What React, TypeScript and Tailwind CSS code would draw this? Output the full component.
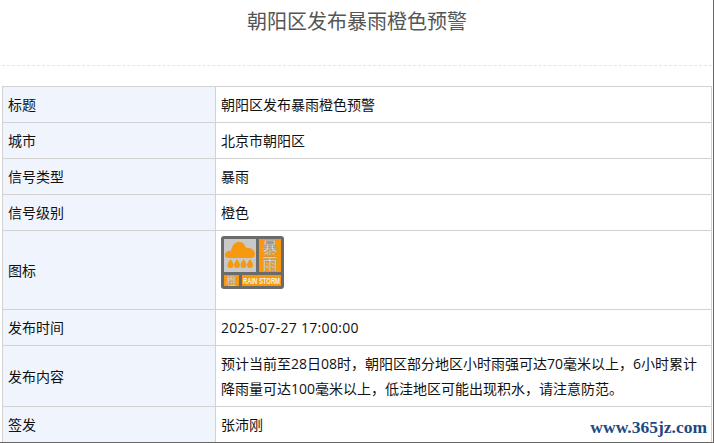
const cjk = { fontFamily: '"Open Sans", "Noto Sans CJK SC", sans-serif' }

const rows: { label: string; value: React.ReactNode; h: string }[] = [
  { label: '标题', value: '朝阳区发布暴雨橙色预警', h: 'h-[36px]' },
  { label: '城市', value: '北京市朝阳区', h: 'h-[36px]' },
  { label: '信号类型', value: '暴雨', h: 'h-[36px]' },
  { label: '信号级别', value: '橙色', h: 'h-[36px]' },
  { label: '图标', value: <StormIcon />, h: 'h-[79px]' },
  { label: '发布时间', value: <span className="tracking-[0.3px]">2025-07-27 17:00:00</span>, h: 'h-[36px]' },
  {
    label: '发布内容',
    value: (
      <p className="leading-[25px]">
        预计当前至28日08时，朝阳区部分地区小时雨强可达70毫米以上，6小时累计降雨量可达100毫米以上，低洼地区可能出现积水，请注意防范。
      </p>
    ),
    h: 'h-[61px]',
  },
  { label: '签发', value: '张沛刚', h: 'h-[36px]' },
]

function StormIcon() {
  return (
    <svg width="63" height="53" viewBox="0 0 63 53" className="mb-[16px] block">
      <rect width="63" height="53" rx="3" fill="#6b6b6b" />
      <rect x="3" y="3" width="32" height="33" fill="#c9c9c9" />
      <rect x="38" y="3" width="22" height="33" fill="#f7990f" />
      <rect x="3" y="39" width="15" height="11" fill="#f7990f" />
      <rect x="21" y="39" width="39" height="11" fill="#f7990f" />
      <path d="M4 19c0-3 3-5 6-4 1-6 5-10 9-9 3 0 5 3 6 6 4-1 9 2 9 6 0 3-2 4-4 4H8c-3 0-4-1-4-3z" fill="#f7990f" />
      <path d="M9.500 23c2 3 3 4.500 3 6a3 3 0 0 1-6 0c0-1.500 1-3 3-6zM16 23c2 3 3 4.500 3 6a3 3 0 0 1-6 0c0-1.500 1-3 3-6zM22.500 23c2 3 3 4.500 3 6a3 3 0 0 1-6 0c0-1.500 1-3 3-6zM29 23c2 3 3 4.500 3 6a3 3 0 0 1-6 0c0-1.500 1-3 3-6z" fill="#f7990f" />
      <text x="49" y="17" textAnchor="middle" fontSize="15" fill="#ececec" stroke="#8a8a8a" strokeWidth="0.3" fontFamily="Noto Sans CJK SC">暴</text>
      <text x="49" y="33" textAnchor="middle" fontSize="15" fill="#ececec" stroke="#8a8a8a" strokeWidth="0.3" fontFamily="Noto Sans CJK SC">雨</text>
      <text x="10.500" y="48.500" textAnchor="middle" fontSize="10" fill="#ececec" stroke="#8a8a8a" strokeWidth="0.2" fontFamily="Noto Sans CJK SC">橙</text>
      <text x="22" y="48" textLength="37" lengthAdjust="spacingAndGlyphs" fontSize="9" fontWeight="700" fill="#f4f4f4" fontFamily="Liberation Sans">RAIN STORM</text>
    </svg>
  )
}

export default function App() {
  return (
    <div className="relative h-[443px] w-[714px] overflow-hidden bg-white" style={cjk}>
      {/* Header */}
      <div className="mx-[2px] h-[66px] border-b border-dashed border-[#e5e5e5] pt-[9px] text-center">
        <h1 className="text-[20px] leading-[26px] font-normal text-[#555]">朝阳区发布暴雨橙色预警</h1>
      </div>

      <table className="mt-[20px] ml-[2px] w-[710px] table-fixed border-collapse text-[14px] text-[#111]">
        <colgroup>
          <col className="w-[213px]" />
          <col />
        </colgroup>
        <tbody>
          {rows.map(r => (
            <tr key={r.label} className={r.h}>
              <td className="border border-[#d2d2d2] bg-[#f0f5fd] px-[5px] py-0">{r.label}</td>
              <td className="border border-[#d2d2d2] px-[5px] py-0">{r.value}</td>
            </tr>
          ))}
        </tbody>
      </table>

      {/* Watermark */}
      <div
        className="absolute right-[7px] bottom-[6px] text-[17.5px] leading-[20px] font-bold text-[#1d4a80]"
        style={{ fontFamily: '"Liberation Serif", serif' }}
      >
        www.365jz.com
      </div>
      <div className="absolute inset-x-0 bottom-0 h-px bg-[#666]" />
      <div className="absolute inset-y-0 right-0 w-px bg-[#666]" />
    </div>
  )
}
